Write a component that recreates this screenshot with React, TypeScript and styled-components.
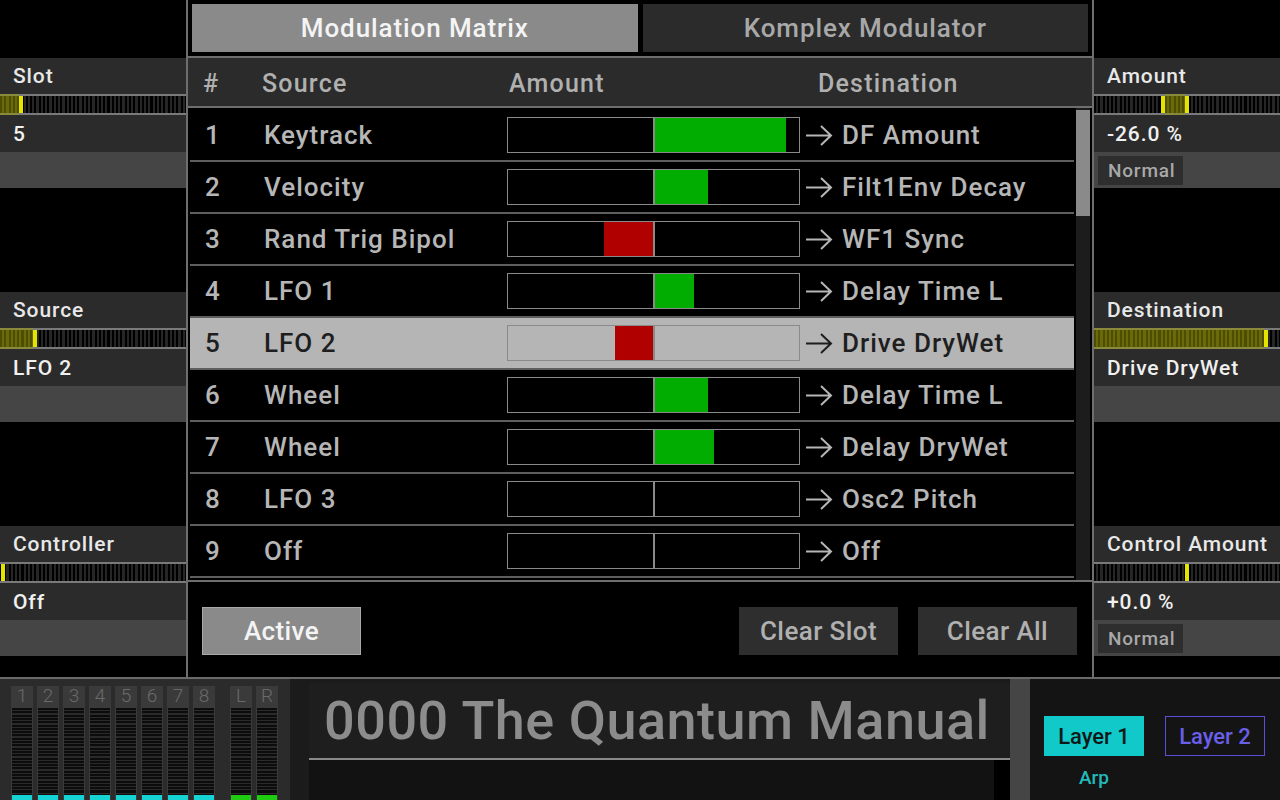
import React from "react";
import styled, { createGlobalStyle } from "styled-components";

const Global = createGlobalStyle`
  html, body { margin: 0; padding: 0; background: #000; }
  body { font-family: "Roboto", "Noto Sans", "DejaVu Sans", sans-serif; }
  * { box-sizing: border-box; }
`;

const Screen = styled.div`
  width: 1280px;
  height: 800px;
  overflow: hidden;
  background: #000;
  display: grid;
  grid-template-rows: 677px 123px;
`;

const Top = styled.div`
  display: grid;
  grid-template-columns: 186px 908px 186px;
  height: 677px;
`;

/* ---------- side panels ---------- */
const SidePanel = styled.div`
  display: flex;
  flex-direction: column;
  gap: 104px;
  padding-top: 58px;
  background: #000;
`;

const Section = styled.div`
  display: flex;
  flex-direction: column;
`;

const ParamLabel = styled.div`
  height: 36px;
  background: #2b2b2b;
  color: #e8e8e8;
  font-size: 21px;
  font-weight: 500;
  letter-spacing: 0.9px;
  padding-left: 13px;
  display: flex;
  align-items: center;
`;

const ParamValue = styled(ParamLabel)`
  height: 37px;
  color: #f0f0f0;
`;

const ParamExtra = styled.div`
  height: 36px;
  background: #454545;
  display: flex;
  align-items: center;
  padding-left: 4px;
`;

const Chip = styled.div`
  width: 85px;
  height: 29px;
  background: #2e2e2e;
  color: #a8a8a8;
  font-size: 19px;
  font-weight: 500;
  letter-spacing: 0.8px;
  display: flex;
  align-items: center;
  padding-left: 10px;
`;

const SliderTrack = styled.div`
  position: relative;
  height: 21px;
  border-top: 2px solid #7a7a7a;
  border-bottom: 2px solid #7a7a7a;
  background: repeating-linear-gradient(90deg, #000 0 2px, #262626 2px 4.3px);
`;

const SliderFill = styled.div<{ $left: number; $width: number }>`
  position: absolute;
  top: -2px;
  bottom: -2px;
  left: ${(p) => p.$left}px;
  width: ${(p) => p.$width}px;
  border-top: 2px solid #8a8a3c;
  border-bottom: 2px solid #8a8a3c;
  background: repeating-linear-gradient(90deg, #4e4e00 0 2px, #6a6a0a 2px 4.3px);
`;

const SliderMarker = styled.div<{ $left: number }>`
  position: absolute;
  top: 0;
  bottom: 0;
  left: ${(p) => p.$left}px;
  width: 4px;
  background: #e4e400;
`;

type SliderProps = { fill?: [number, number]; markers: number[] };
const Slider = ({ fill, markers }: SliderProps) => (
  <SliderTrack>
    {fill && <SliderFill $left={fill[0]} $width={fill[1] - fill[0]} />}
    {markers.map((m) => (
      <SliderMarker key={m} $left={m} />
    ))}
  </SliderTrack>
);

type ParamProps = {
  label: string;
  value: string;
  slider: SliderProps;
  chip?: string;
};
const Param = ({ label, value, slider, chip }: ParamProps) => (
  <Section>
    <ParamLabel>{label}</ParamLabel>
    <Slider {...slider} />
    <ParamValue>{value}</ParamValue>
    <ParamExtra>{chip && <Chip>{chip}</Chip>}</ParamExtra>
  </Section>
);

/* ---------- center ---------- */
const Center = styled.div`
  border-left: 2px solid #6e6e6e;
  border-right: 2px solid #6e6e6e;
  display: flex;
  flex-direction: column;
  background: #000;
`;

const Tabs = styled.div`
  display: grid;
  grid-template-columns: 1fr 1fr;
  gap: 5px;
  padding: 4px 4px 0;
`;

const Tab = styled.div<{ $active?: boolean }>`
  height: 48px;
  background: ${(p) => (p.$active ? "#8a8a8a" : "#2b2b2b")};
  color: ${(p) => (p.$active ? "#f4f4f4" : "#a8a8a8")};
  font-size: 26px;
  font-weight: 500;
  letter-spacing: 0.9px;
  display: flex;
  align-items: center;
  justify-content: center;
`;

const Table = styled.div`
  margin-top: 4px;
  border-top: 2px solid #6e6e6e;
  display: flex;
  flex-direction: column;
`;

const Header = styled.div`
  height: 50px;
  background: #2b2b2b;
  border-bottom: 2px solid #6e6e6e;
  display: grid;
  grid-template-columns: 59px 247px 309px 1fr;
  align-items: center;
  padding-left: 15px;
  padding-top: 2px;
  color: #b0b0b0;
  font-size: 25px;
  font-weight: 500;
  letter-spacing: 1.2px;
`;

const Body = styled.div`
  height: 474px;
  display: flex;
  border-bottom: 2px solid #6e6e6e;
`;

const RowList = styled.div`
  width: 884px;
  margin-left: 2px;
  padding-top: 2px;
  overflow: hidden;
`;

const Row = styled.div<{ $selected?: boolean }>`
  height: 52px;
  border-bottom: 2px solid #5e5e5e;
  background: ${(p) => (p.$selected ? "#b5b5b5" : "#000")};
  color: ${(p) => (p.$selected ? "#1e1e1e" : "#b6b6b6")};
  display: grid;
  grid-template-columns: 59px 243px 293px 1fr;
  align-items: center;
  padding-left: 15px;
  font-size: 26px;
  font-weight: 500;
  letter-spacing: 1px;
`;

const AmountBar = styled.div`
  height: 36px;
  border: 1px solid #8a8a8a;
  display: flex;
`;

const Half = styled.div<{ $side: "left" | "right" }>`
  flex: 1;
  display: flex;
  justify-content: ${(p) => (p.$side === "left" ? "flex-end" : "flex-start")};
`;

const Divider = styled.div`
  width: 2px;
  background: #8a8a8a;
`;

const Fill = styled.div<{ $color: string }>`
  height: 100%;
  background: ${(p) => p.$color};
`;

const Dest = styled.div`
  display: flex;
  align-items: center;
  gap: 9px;
  padding-left: 5px;
`;

const ArrowSvg = styled.svg`
  flex: none;
  display: block;
`;

const Arrow = ({ color }: { color: string }) => (
  <ArrowSvg width="28" height="24" viewBox="0 0 28 24">
    <path
      d="M1 12.5 H26 M16 3 L26 12.5 L16 22"
      fill="none"
      stroke={color}
      strokeWidth="2"
    />
  </ArrowSvg>
);

const ScrollTrack = styled.div`
  width: 14px;
  margin: 0 2px;
  background: #1c1c1c;
  padding-top: 2px;
`;

const ScrollThumb = styled.div`
  height: 106px;
  background: #8a8a8a;
`;

const ButtonBar = styled.div`
  flex: 1;
  display: flex;
  align-items: center;
  gap: 20px;
  padding: 3px 15px 0 14px;
`;

const Button = styled.div<{ $active?: boolean }>`
  width: 159px;
  height: 48px;
  display: flex;
  align-items: center;
  justify-content: center;
  font-size: 26px;
  font-weight: 500;
  letter-spacing: 0.4px;
  background: ${(p) => (p.$active ? "#8a8a8a" : "#2e2e2e")};
  color: ${(p) => (p.$active ? "#f4f4f4" : "#b0b0b0")};
  border: ${(p) => (p.$active ? "1px solid #a8a8a8" : "none")};
  margin-right: ${(p) => (p.$active ? "auto" : "0")};
`;

/* ---------- bottom bar ---------- */
const BottomBar = styled.div`
  border-top: 2px solid #6a6a6a;
  display: grid;
  grid-template-columns: 290px 720px 20px 1fr;
  overflow: hidden;
`;

const Meters = styled.div`
  background: #2b2b2b;
  display: flex;
  gap: 4px;
  padding: 7px 0 0 11px;
`;

const MeterCol = styled.div<{ $spaced?: boolean }>`
  width: 22px;
  display: flex;
  flex-direction: column;
  background: #3a3a3a;
  padding: 0 1px;
  margin-left: ${(p) => (p.$spaced ? "11px" : "0")};
`;

const MeterLabel = styled.div`
  height: 20px;
  text-align: center;
  line-height: 20px;
  color: #6a6a6a;
  font-size: 19px;
  font-weight: 300;
`;

const MeterBody = styled.div`
  flex: 1;
  margin-top: 2px;
  display: flex;
  flex-direction: column;
  justify-content: flex-end;
  background: repeating-linear-gradient(180deg, #0c0c0c 0 2px, #2a2a2a 2px 3.3px);
`;

const MeterLevel = styled.div<{ $color: string }>`
  height: 5px;
  background: ${(p) => p.$color};
`;

const PresetArea = styled.div`
  background: #1b1b1b;
  padding: 4px 0 0 19px;
  display: flex;
  flex-direction: column;
`;

const PresetName = styled.div`
  height: 77px;
  background: #1e1e1e;
  border-bottom: 2px solid #8a8a8a;
  color: #8c8c8c;
  font-size: 54px;
  font-weight: 500;
  letter-spacing: 0.5px;
  padding-left: 15px;
  display: flex;
  align-items: center;
  white-space: nowrap;
`;

const PresetBelow = styled.div`
  flex: 1;
  display: flex;
  background: #000;
`;

const PresetList = styled.div`
  width: 685px;
  background: #121212;
`;

const ScrollBar = styled.div`
  background: #454545;
`;

const LayerArea = styled.div`
  background: #141414;
  padding: 37px 0 0 14px;
  display: flex;
  flex-direction: column;
`;

const LayerRow = styled.div`
  display: flex;
  gap: 21px;
`;

const LayerButton = styled.div<{ $active?: boolean }>`
  width: 100px;
  height: 40px;
  display: flex;
  align-items: center;
  justify-content: center;
  font-size: 22px;
  font-weight: 500;
  background: ${(p) => (p.$active ? "#12c9c9" : "transparent")};
  color: ${(p) => (p.$active ? "#101818" : "#6a5fe8")};
  border: ${(p) => (p.$active ? "none" : "1px solid #5a4fd6")};
`;

const ArpLabel = styled.div`
  width: 100px;
  margin-top: 10px;
  text-align: center;
  color: #22baba;
  font-size: 19px;
  font-weight: 500;
`;

/* ---------- data ---------- */
const rows = [
  { src: "Keytrack", amt: 0.91, dst: "DF Amount" },
  { src: "Velocity", amt: 0.37, dst: "Filt1Env Decay" },
  { src: "Rand Trig Bipol", amt: -0.34, dst: "WF1 Sync" },
  { src: "LFO 1", amt: 0.27, dst: "Delay Time L" },
  { src: "LFO 2", amt: -0.26, dst: "Drive DryWet" },
  { src: "Wheel", amt: 0.37, dst: "Delay Time L" },
  { src: "Wheel", amt: 0.41, dst: "Delay DryWet" },
  { src: "LFO 3", amt: 0, dst: "Osc2 Pitch" },
  { src: "Off", amt: 0, dst: "Off" },
];

const HALF = 144.5;
const SELECTED = 4;

const meters = ["1", "2", "3", "4", "5", "6", "7", "8"];

export default function App() {
  return (
    <>
      <Global />
      <Screen>
        <Top>
          <SidePanel>
            <Param label="Slot" value="5" slider={{ fill: [0, 19], markers: [19] }} />
            <Param label="Source" value="LFO 2" slider={{ fill: [0, 33], markers: [33] }} />
            <Param label="Controller" value="Off" slider={{ markers: [1] }} />
          </SidePanel>

          <Center>
            <Tabs>
              <Tab $active>Modulation Matrix</Tab>
              <Tab>Komplex Modulator</Tab>
            </Tabs>
            <Table>
              <Header>
                <span>#</span>
                <span>Source</span>
                <span>Amount</span>
                <span>Destination</span>
              </Header>
              <Body>
                <RowList>
                  {rows.map((r, i) => {
                    const sel = i === SELECTED;
                    const w = Math.round(Math.abs(r.amt) * HALF);
                    return (
                      <Row key={i} $selected={sel}>
                        <span>{i + 1}</span>
                        <span>{r.src}</span>
                        <AmountBar>
                          <Half $side="left">
                            {r.amt < 0 && <Fill $color="#b00000" style={{ width: w }} />}
                          </Half>
                          <Divider />
                          <Half $side="right">
                            {r.amt > 0 && <Fill $color="#00ad00" style={{ width: w }} />}
                          </Half>
                        </AmountBar>
                        <Dest>
                          <Arrow color={sel ? "#1e1e1e" : "#b6b6b6"} />
                          <span>{r.dst}</span>
                        </Dest>
                      </Row>
                    );
                  })}
                </RowList>
                <ScrollTrack>
                  <ScrollThumb />
                </ScrollTrack>
              </Body>
            </Table>
            <ButtonBar>
              <Button $active>Active</Button>
              <Button>Clear Slot</Button>
              <Button>Clear All</Button>
            </ButtonBar>
          </Center>

          <SidePanel>
            <Param
              label="Amount"
              value="-26.0 %"
              slider={{ fill: [71, 91], markers: [67, 91] }}
              chip="Normal"
            />
            <Param
              label="Destination"
              value="Drive DryWet"
              slider={{ fill: [0, 170], markers: [170] }}
            />
            <Param
              label="Control Amount"
              value="+0.0 %"
              slider={{ markers: [91] }}
              chip="Normal"
            />
          </SidePanel>
        </Top>

        <BottomBar>
          <Meters>
            {meters.map((m) => (
              <MeterCol key={m}>
                <MeterLabel>{m}</MeterLabel>
                <MeterBody>
                  <MeterLevel $color="#17d4d4" />
                </MeterBody>
              </MeterCol>
            ))}
            {["L", "R"].map((m, i) => (
              <MeterCol key={m} $spaced={i === 0}>
                <MeterLabel>{m}</MeterLabel>
                <MeterBody>
                  <MeterLevel $color="#20cc10" />
                </MeterBody>
              </MeterCol>
            ))}
          </Meters>
          <PresetArea>
            <PresetName>0000 The Quantum Manual</PresetName>
            <PresetBelow>
              <PresetList />
            </PresetBelow>
          </PresetArea>
          <ScrollBar />
          <LayerArea>
            <LayerRow>
              <LayerButton $active>Layer 1</LayerButton>
              <LayerButton>Layer 2</LayerButton>
            </LayerRow>
            <ArpLabel>Arp</ArpLabel>
          </LayerArea>
        </BottomBar>
      </Screen>
    </>
  );
}
